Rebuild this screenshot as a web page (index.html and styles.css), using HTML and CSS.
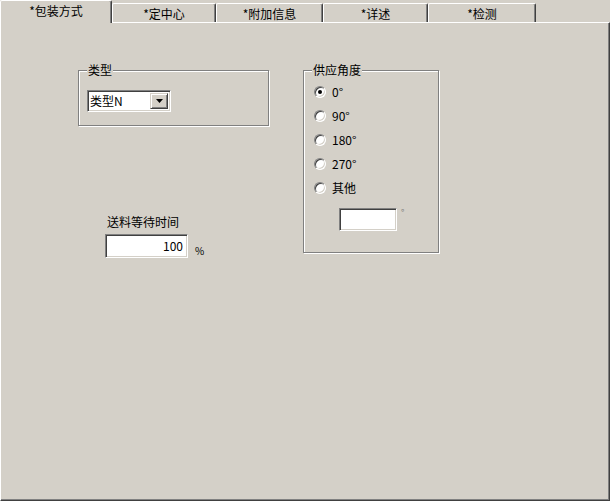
FILE: index.html
```html
<!DOCTYPE html>
<html lang="zh-CN">
<head>
  <meta charset="UTF-8">
  <title>包装方式</title>
  <link rel="stylesheet" href="styles.css">
</head>
<body>
  <div class="window">
    <div class="tabs">
      <div class="tab active tab-1">*包装方式</div>
      <div class="tab tab-2">*定中心</div>
      <div class="tab tab-3">*附加信息</div>
      <div class="tab tab-4">*详述</div>
      <div class="tab tab-5">*检测</div>
    </div>

    <div class="panel">
      <div class="col-left">
        <fieldset class="group group-type">
          <legend>类型</legend>
          <div class="combo">
            <span class="combo-text">类型N</span>
            <span class="combo-btn">
              <svg width="7" height="4" viewBox="0 0 7 4"><path d="M0 0h7L3.5 4z" fill="#000"/></svg>
            </span>
          </div>
        </fieldset>

        <div class="wait">
          <div class="wait-label">送料等待时间</div>
          <div class="wait-row">
            <div class="edit edit-wait">100</div>
            <span class="unit">%</span>
          </div>
        </div>
      </div>

      <fieldset class="group group-angle">
        <legend>供应角度</legend>
        <div class="radio-row"><span class="radio checked"></span><span>0°</span></div>
        <div class="radio-row"><span class="radio"></span><span>90°</span></div>
        <div class="radio-row"><span class="radio"></span><span>180°</span></div>
        <div class="radio-row"><span class="radio"></span><span>270°</span></div>
        <div class="radio-row"><span class="radio"></span><span>其他</span></div>
        <div class="other-row">
          <div class="edit edit-other"></div>
          <span class="deg">°</span>
        </div>
      </fieldset>
    </div>
  </div>
</body>
</html>
```

FILE: styles.css
```css
* {
  box-sizing: border-box;
}

body {
  margin: 0;
  background: #d4d0c8;
  font-family: "Noto Sans CJK SC", "Liberation Sans", sans-serif;
  font-size: 12px;
  line-height: 14px;
  color: #000;
}

.window {
  width: 610px;
  height: 501px;
  display: flex;
  flex-direction: column;
}

/* tab strip */
.tabs {
  display: flex;
  height: 22px;
  align-items: flex-start;
}

.tab {
  display: flex;
  justify-content: center;
  margin-top: 3px;
  height: 19px;
  padding-top: 3px;
  border-left: 1px solid #fff;
  border-top: 1px solid #fff;
  border-right: 1px solid #404040;
  border-radius: 2px 2px 0 0;
  box-shadow: inset -1px 0 0 #808080;
  white-space: nowrap;
}

.tab.active {
  position: relative;
  z-index: 1;
  margin-top: 0;
  height: 23px;
  padding-top: 3px;
  background: #d4d0c8;
}

.tab-1 { width: 112px; }
.tab-2 { width: 104px; }
.tab-3 { width: 107px; }
.tab-4 { width: 105px; }
.tab-5 { width: 108px; }

/* page body */
.panel {
  flex: 1;
  display: flex;
  align-items: flex-start;
  padding: 40px 0 0 77px;
  border-top: 1px solid #fff;
  border-left: 1px solid #fff;
  border-right: 1px solid #404040;
  border-bottom: 1px solid #404040;
  box-shadow: inset -1px -1px 0 #808080;
}

.col-left {
  width: 191px;
  display: flex;
  flex-direction: column;
}

.group {
  margin: 0;
  padding: 0;
  border: 1px solid #808080;
  box-shadow: inset 1px 1px 0 #fff, 1px 1px 0 #fff;
  min-width: 0;
}

.group legend {
  margin-left: 0;
  padding: 0 1px;
  line-height: 14px;
  background: #d4d0c8;
}

.group-type {
  width: 191px;
  padding: 13px 0 13px 8px;
}

/* sunken 3d box used by combo and edits */
.combo,
.edit {
  background: #fff;
  border: 1px solid;
  border-color: #808080 #fff #fff #808080;
  box-shadow: inset 1px 1px 0 #404040, inset -1px -1px 0 #d4d0c8;
}

.combo {
  width: 84px;
  height: 22px;
  display: flex;
  align-items: center;
  justify-content: space-between;
  padding: 2px;
}

.combo-btn {
  width: 18px;
  height: 100%;
  display: flex;
  align-items: center;
  justify-content: center;
  background: #d4d0c8;
  border: 1px solid;
  border-color: #d4d0c8 #404040 #404040 #d4d0c8;
  box-shadow: inset 1px 1px 0 #fff, inset -1px -1px 0 #808080;
}

.wait {
  margin: 89px 0 0 27px;
}

.wait-label {
  padding-left: 2px;
}

.wait-row {
  display: flex;
  align-items: flex-end;
  margin-top: 5px;
}

.edit-wait {
  width: 83px;
  height: 24px;
  padding: 4px 4px 0 0;
  text-align: right;
}

.unit {
  margin-left: 7px;
  font-size: 10px;
  line-height: 10px;
  margin-bottom: 2px;
}

/* angle group */
.group-angle {
  width: 136px;
  margin-left: 34px;
  padding: 3px 0 21px 10px;
}

.group-angle legend {
  margin-left: -2px;
}

.radio-row {
  display: flex;
  align-items: center;
  gap: 6px;
  height: 24px;
}

.radio {
  position: relative;
  width: 12px;
  height: 12px;
  border-radius: 50%;
  background: #fff;
  border: 1px solid;
  border-color: #808080 #fff #fff #808080;
  box-shadow: inset 1px 1px 0 #404040, inset -1px -1px 0 #d4d0c8;
}

.radio.checked::after {
  content: "";
  position: absolute;
  left: 3px;
  top: 3px;
  width: 4px;
  height: 4px;
  border-radius: 50%;
  background: #000;
}

.other-row {
  display: flex;
  align-items: flex-start;
  margin: 8px 0 0 25px;
}

.edit-other {
  width: 58px;
  height: 23px;
}

.deg {
  margin-left: 4px;
  font-size: 9px;
  line-height: 9px;
  color: #808080;
}
```
